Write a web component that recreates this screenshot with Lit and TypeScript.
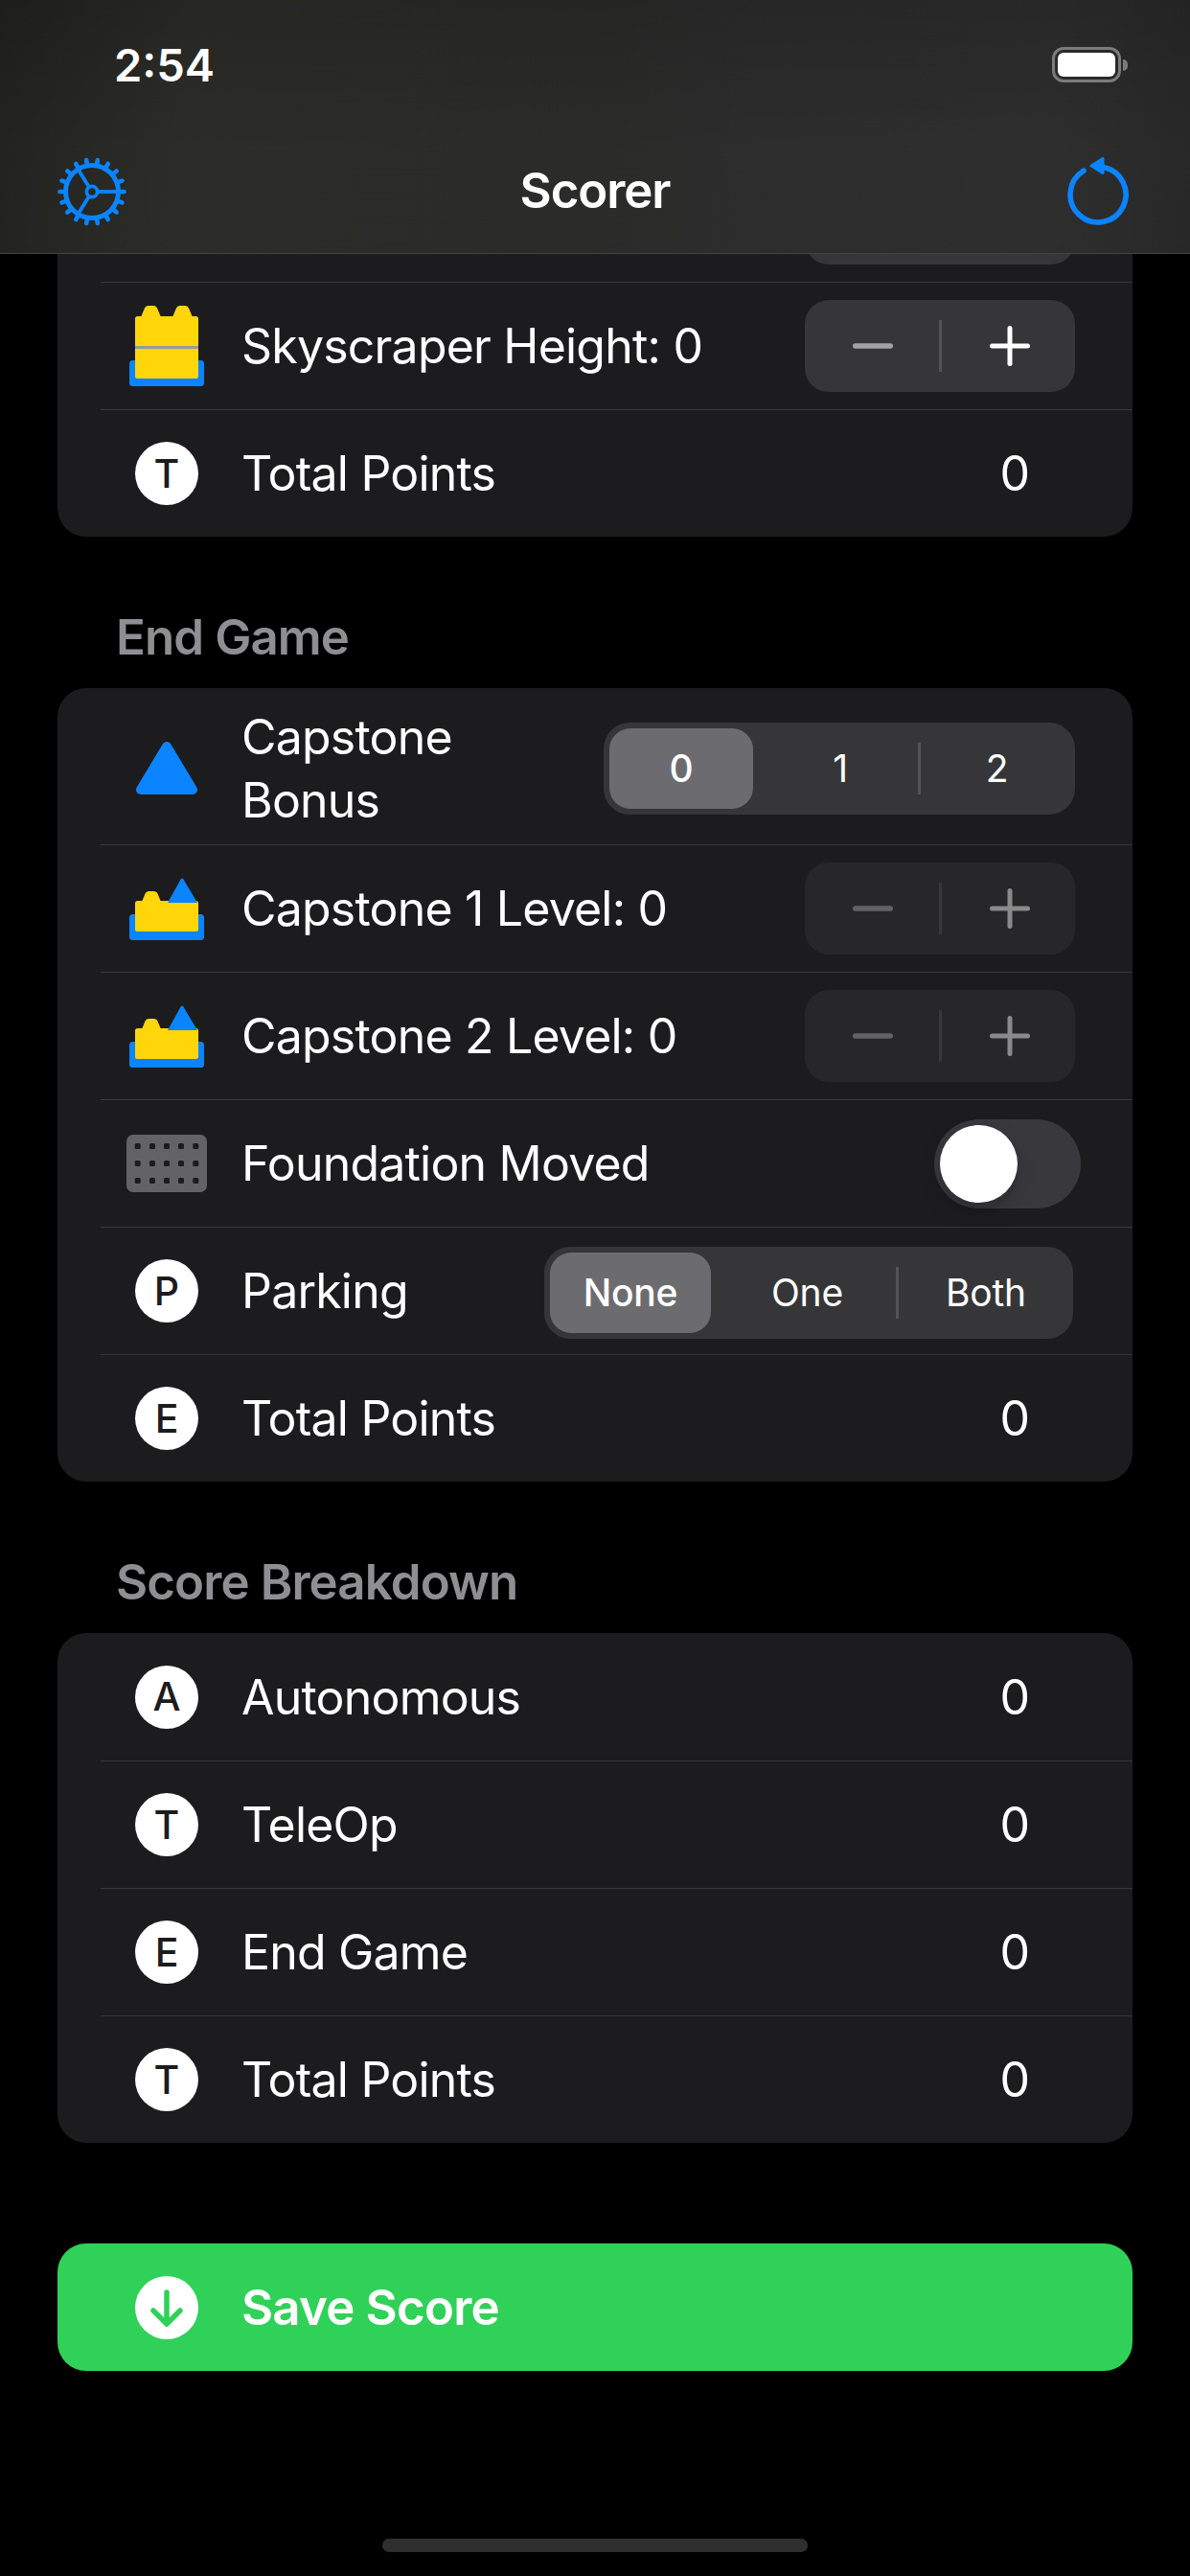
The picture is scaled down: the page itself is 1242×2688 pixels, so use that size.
import { LitElement, html, svg, css } from 'lit';
import { customElement } from 'lit/decorators.js';

const BLUE = '#0a84ff';
const YELLOW = '#ffd60a';

// gear drawn around (36,36): 18 teeth, ring, hub and three spokes
const gearIcon = () => {
  const teeth = Array.from({ length: 18 }, (_, i) => {
    const a = (i * 20 * Math.PI) / 180;
    return svg`<line x1=${36 + 28 * Math.cos(a)} y1=${36 + 28 * Math.sin(a)} x2=${36 + 33.5 * Math.cos(a)} y2=${36 + 33.5 * Math.sin(a)} stroke-width="4.6" stroke-linecap="round"></line>`;
  });
  const spokes = [0, 122, 238].map((deg) => {
    const a = (deg * Math.PI) / 180;
    return svg`<line x1=${36 + 6 * Math.cos(a)} y1=${36 - 6 * Math.sin(a)} x2=${36 + 27 * Math.cos(a)} y2=${36 - 27 * Math.sin(a)} stroke-width="3.8"></line>`;
  });
  return html`<svg class="gear" width="72" height="72" viewBox="0 0 72 72" fill="none" stroke=${BLUE}>
    ${teeth}
    <circle cx="36" cy="36" r="27.5" stroke-width="5"></circle>
    ${spokes}
    <circle cx="36" cy="36" r="5.6" stroke-width="3.6"></circle>
  </svg>`;
};

const resetIcon = () => html`<svg class="reset" width="66" height="73" viewBox="0 0 66 73" fill="none">
  <path d="M18 15.2A29 29 0 1 0 39 11.6" stroke=${BLUE} stroke-width="5.6" stroke-linecap="round"></path>
  <polygon points="26,10 38,2.5 38,17.5" fill=${BLUE} stroke=${BLUE} stroke-width="3" stroke-linejoin="round"></polygon>
</svg>`;

const skyscraperIcon = () => html`<svg class="glyph" width="78" height="84" viewBox="0 0 78 84">
  <rect x="0" y="57" width="78" height="27" rx="3.5" fill=${BLUE}></rect>
  <path d="M12 12L16 2.5Q17 0 19.5 0H25.5Q28 0 29 2.5L33 12ZM45 12L49 2.5Q50 0 52.5 0H58.500Q61 0 62 2.500L66 12Z" fill=${YELLOW}></path>
  <rect x="6" y="11" width="66" height="65" rx="2.500" fill=${YELLOW}></rect>
  <rect x="6" y="42" width="66" height="3" fill="#98989d"></rect>
</svg>`;

const capstoneIcon = () => html`<svg class="glyph" width="78" height="65" viewBox="0 0 78 65">
  <rect x="0" y="38" width="78" height="27" rx="3.5" fill=${BLUE}></rect>
  <path d="M13 25L16.500 16.500Q17.500 14 20 14H26Q28.500 14 29.500 16.500L33 25Z" fill=${YELLOW}></path>
  <rect x="6" y="24" width="66" height="32" rx="2.500" fill=${YELLOW}></rect>
  <path d="M40 26L53.600 1.500Q55 -0.500 56.400 1.500L71 26Z" fill=${BLUE}></path>
</svg>`;

const triangleIcon = () => html`<svg class="glyph" width="78" height="55" viewBox="0 0 78 55">
  <polygon points="39,5 66,50 12,50" fill=${BLUE} stroke=${BLUE} stroke-width="10" stroke-linejoin="round"></polygon>
</svg>`;

const foundationIcon = () => {
  const dots = [12, 30, 48].flatMap((y) =>
    [11.700, 27, 42, 57, 72.300].map((x) => svg`<rect x=${x - 3} y=${y - 3} width="6" height="6" rx="1.500" fill="#1c1c1e"></rect>`)
  );
  return html`<svg class="glyph wide" width="84" height="60" viewBox="0 0 84 60">
    <rect width="84" height="60" rx="7" fill="#636366"></rect>
    ${dots}
  </svg>`;
};

const letterIcon = (letter: string) => html`<span class="letter">${letter}</span>`;

const stepper = (disabled = false) => html`<div class="stepper ${disabled ? 'off' : ''}">
  <svg class="minus" width="42" height="6" viewBox="0 0 42 6"><rect width="42" height="5.500" y="0.250" rx="2.700"></rect></svg>
  <span class="stepper-rule"></span>
  <svg class="plus" width="42" height="42" viewBox="0 0 42 42"><rect y="18.500" width="42" height="5" rx="2.500"></rect><rect x="18.500" width="5" height="42" rx="2.500"></rect></svg>
</div>`;

const segmented = (kind: string, items: string[]) => html`<div class="seg ${kind}">
  <span class="seg-item on">${items[0]}</span>
  <span class="seg-item mid">${items[1]}</span>
  <span class="seg-rule"></span>
  <span class="seg-item last">${items[2]}</span>
</div>`;

const row = (icon: unknown, label: unknown, right: unknown = null, extra = '') => html`<div class="row ${extra}">
  <div class="icon">${icon}</div>
  <div class="label">${label}</div>
  ${right}
</div>`;

const value = (v: string) => html`<span class="value">${v}</span>`;

@customElement('app-root')
export class AppRoot extends LitElement {
  static styles = css`
    :host {
      display: block;
      position: relative;
      width: 1242px;
      height: 2688px;
      overflow: hidden;
      background: #000;
      color: #fff;
      font-family: Inter, "Liberation Sans", sans-serif;
      font-size: 50px;
    }

    .bar {
      position: absolute;
      top: 0;
      left: 0;
      right: 0;
      height: 265px;
      box-sizing: border-box;
      border-bottom: 1px solid #454545;
      background:
        linear-gradient(180deg, rgba(0, 0, 0, 0.14), rgba(0, 0, 0, 0) 60%),
        linear-gradient(95deg, #222320 0%, #2c2c28 16%, #2b2c2a 50%, #2e2e2f 88%, #282828 100%);
      z-index: 2;
    }

    .status {
      display: flex;
      align-items: center;
      justify-content: space-between;
      height: 37px;
      padding: 49px 65px 0 119px;
    }

    .time {
      font-size: 47px;
      font-weight: 600;
    }

    .battery {
      display: flex;
      align-items: center;
      gap: 2px;
    }

    .battery-body {
      width: 72px;
      height: 37px;
      box-sizing: border-box;
      padding: 3px;
      border: 3px solid #7b7b7b;
      border-radius: 12px;
    }

    .battery-fill {
      width: 60px;
      height: 25px;
      background: #fff;
      border-radius: 6px;
    }

    .battery-nub {
      width: 5px;
      height: 12px;
      background: #7b7b7b;
      border-radius: 0 6px 6px 0;
    }

    .nav {
      display: grid;
      grid-template-columns: 1fr auto 1fr;
      align-items: center;
      height: 72px;
      margin-top: 77px;
      padding: 0 62px;
    }

    .gear {
      display: block;
      margin-left: -2px;
    }

    .reset {
      display: block;
      justify-self: end;
      margin-right: 1px;
    }

    .title {
      margin-bottom: 3px;
      font-size: 51px;
      font-weight: 600;
      letter-spacing: -1.1px;
    }

    .list {
      display: flex;
      flex-direction: column;
      padding: 161px 60px 0;
    }

    .card {
      background: #1c1c1e;
      border-radius: 30px;
      overflow: hidden;
    }

    .section {
      height: 60px;
      margin: 75px 0 23px;
      padding-left: 61px;
      line-height: 60px;
      font-size: 51px;
      font-weight: 600;
      color: #8e8e93;
      letter-spacing: -0.9px;
    }

    .row {
      display: flex;
      flex: 1;
      align-items: center;
      height: 133px;
      box-sizing: border-box;
      margin-left: 45px;
      padding-right: 60px;
      border-top: 1.5px solid #38383a;
    }

    .row:first-child {
      border-top: 0;
    }

    .row.tall {
      height: 163px;
      padding-top: 4px;
    }

    .icon {
      display: flex;
      align-items: center;
      justify-content: center;
      flex: none;
      width: 78px;
      margin-left: 30px;
    }

    .glyph {
      display: block;
      flex: none;
    }

    .letter {
      display: flex;
      align-items: center;
      justify-content: center;
      width: 66px;
      height: 66px;
      border-radius: 50%;
      background: #fff;
      color: #1c1c1e;
      font-size: 41px;
      font-weight: 500;
      line-height: 1;
    }

    .label {
      flex: 1;
      margin-left: 39px;
      line-height: 66px;
      letter-spacing: -0.8px;
      white-space: nowrap;
    }

    .value {
      margin-right: 47px;
    }

    .stepper {
      display: flex;
      align-items: center;
      flex: none;
      width: 282px;
      height: 96px;
      box-sizing: border-box;
      padding-left: 50px;
      background: #363639;
      border-radius: 25px;
    }

    .stepper svg {
      display: block;
      flex: none;
    }

    .minus rect {
      fill: #a3a3a5;
    }

    .plus rect {
      fill: #fff;
    }

    .stepper-rule {
      flex: none;
      width: 3px;
      height: 54px;
      margin: 0 50px 0 48px;
      background: #545457;
    }

    .stepper.off {
      background: #272729;
    }

    .stepper.off .minus rect {
      fill: #636365;
    }

    .stepper.off .plus rect {
      fill: #8a8a8b;
    }

    .stepper.off .stepper-rule {
      background: #38383a;
    }

    .seg {
      display: flex;
      align-items: center;
      flex: none;
      height: 96px;
      box-sizing: border-box;
      padding-left: 6px;
      background: #363639;
      border-radius: 27px;
      font-size: 39px;
      letter-spacing: -0.2px;
    }

    .seg-item {
      display: flex;
      align-items: center;
      justify-content: center;
      height: 84px;
    }

    .seg-item.on {
      background: #6c6c70;
      border-radius: 22px;
      font-weight: 500;
    }

    .seg-rule {
      flex: none;
      width: 3px;
      height: 54px;
      background: #545457;
    }

    .seg.num {
      width: 492px;
    }

    .seg.num .on {
      width: 150px;
    }

    .seg.num .mid {
      width: 162px;
      margin-left: 10px;
    }

    .seg.num .last {
      width: 159px;
    }

    .seg.park {
      width: 552px;
      margin: 3px 2px 0 0;
    }

    .seg.park .on {
      width: 168px;
    }

    .seg.park .mid {
      width: 185px;
      margin-left: 8px;
    }

    .seg.park .last {
      width: 182px;
    }

    .switch {
      display: flex;
      align-items: center;
      flex: none;
      width: 153px;
      height: 93px;
      box-sizing: border-box;
      margin-right: -6px;
      padding-left: 6px;
      background: #39393d;
      border-radius: 47px;
    }

    .knob {
      width: 81px;
      height: 81px;
      border-radius: 50%;
      background: #fff;
      box-shadow: 0 9px 24px rgba(0, 0, 0, 0.15), 0 9px 3px rgba(0, 0, 0, 0.06);
    }

    .save {
      display: flex;
      align-items: center;
      height: 133px;
      margin-top: 105px;
      background: #30d158;
      border-radius: 30px;
      font-size: 51px;
      font-weight: 600;
    }

    .save-mark {
      display: block;
      width: 66px;
      height: 66px;
      border-radius: 50%;
      background: #fff;
    }

    .home {
      align-self: center;
      width: 444px;
      height: 14px;
      margin-top: 175px;
      border-radius: 7px;
      background: #2f2f2f;
    }
  `;

  render() {
    return html`
      <header class="bar">
        <div class="status">
          <span class="time">2:54</span>
          <div class="battery">
            <div class="battery-body"><div class="battery-fill"></div></div>
            <div class="battery-nub"></div>
          </div>
        </div>
        <div class="nav">
          ${gearIcon()}
          <span class="title">Scorer</span>
          ${resetIcon()}
        </div>
      </header>

      <main class="list">
        <div class="card">
          ${row(null, null, stepper())}
          ${row(skyscraperIcon(), 'Skyscraper Height: 0', stepper())}
          ${row(letterIcon('T'), 'Total Points', value('0'))}
        </div>

        <div class="section">End Game</div>
        <div class="card">
          ${row(triangleIcon(), html`Capstone<br />Bonus`, segmented('num', ['0', '1', '2']), 'tall')}
          ${row(capstoneIcon(), 'Capstone 1 Level: 0', stepper(true))}
          ${row(capstoneIcon(), 'Capstone 2 Level: 0', stepper(true))}
          ${row(foundationIcon(), 'Foundation Moved', html`<div class="switch"><div class="knob"></div></div>`)}
          ${row(letterIcon('P'), 'Parking', segmented('park', ['None', 'One', 'Both']))}
          ${row(letterIcon('E'), 'Total Points', value('0'))}
        </div>

        <div class="section">Score Breakdown</div>
        <div class="card">
          ${row(letterIcon('A'), 'Autonomous', value('0'))}
          ${row(letterIcon('T'), 'TeleOp', value('0'))}
          ${row(letterIcon('E'), 'End Game', value('0'))}
          ${row(letterIcon('T'), 'Total Points', value('0'))}
        </div>

        <div class="save">
          ${row(
            html`<svg class="save-mark" viewBox="0 0 66 66" fill="none" stroke="#30d158" stroke-width="5.500" stroke-linecap="round" stroke-linejoin="round"><path d="M33 17V50M19 36L33 50L47 36"></path></svg>`,
            'Save Score'
          )}
        </div>

        <div class="home"></div>
      </main>
    `;
  }
}
